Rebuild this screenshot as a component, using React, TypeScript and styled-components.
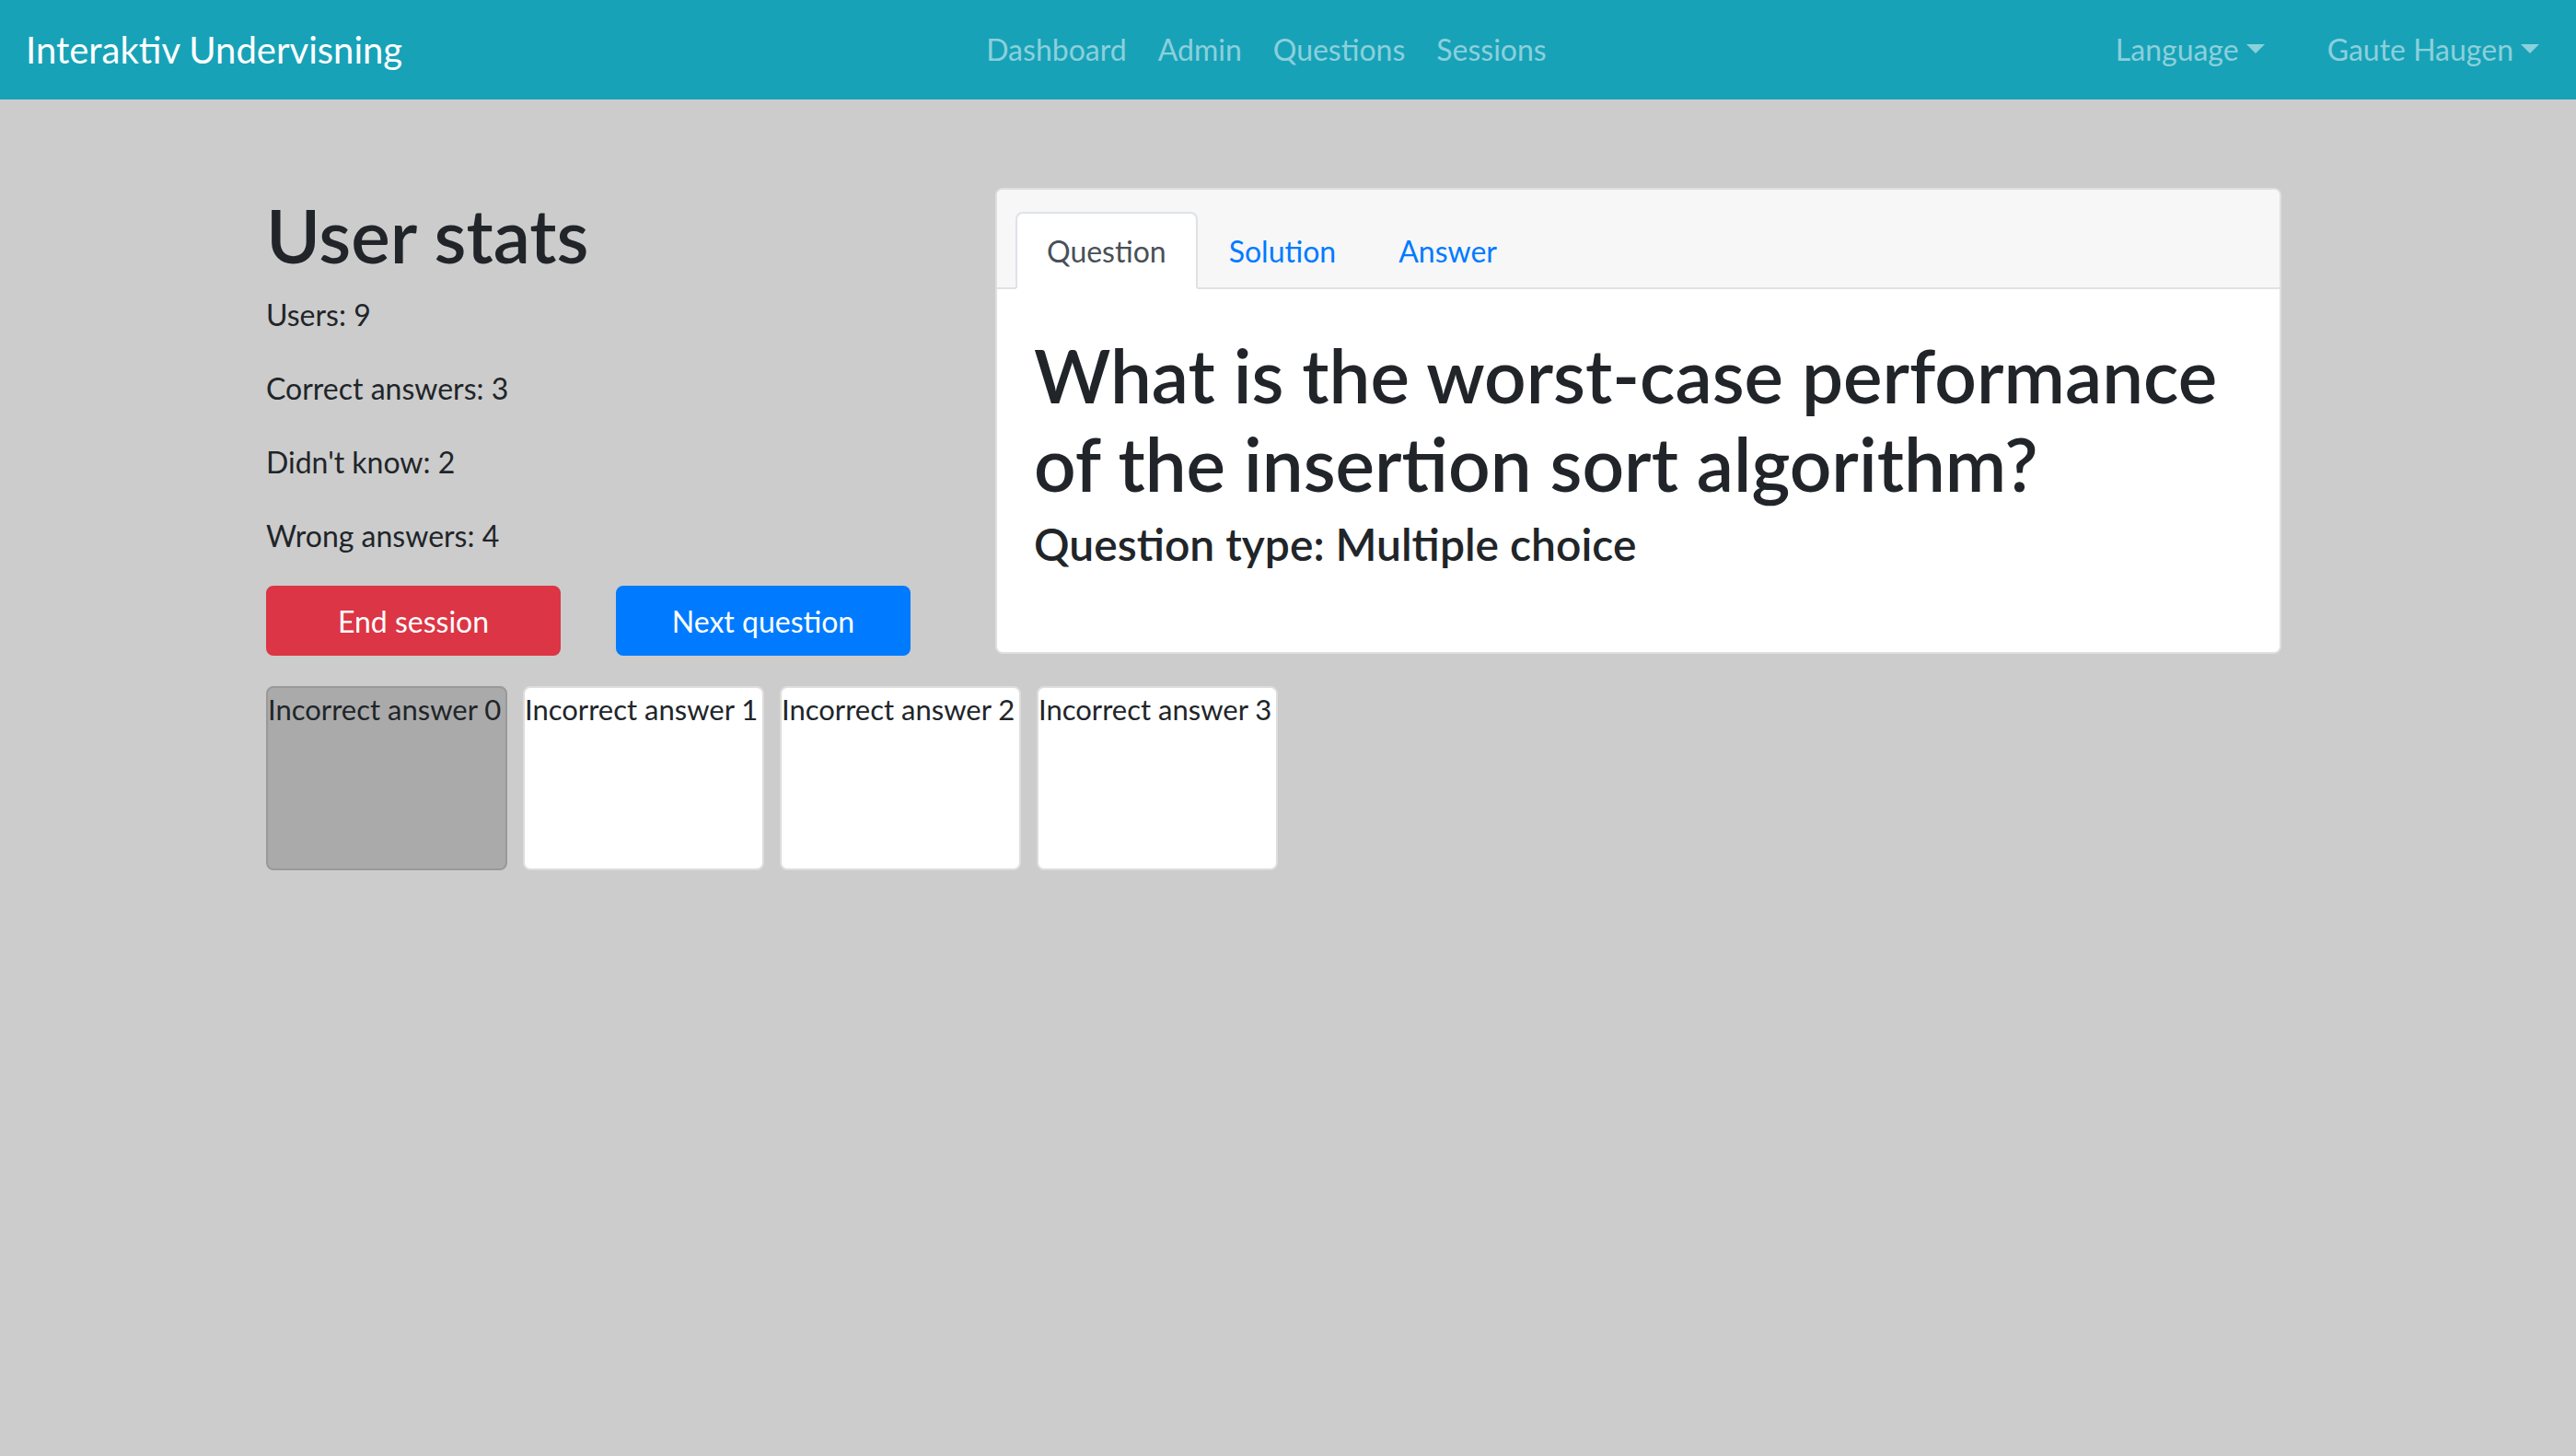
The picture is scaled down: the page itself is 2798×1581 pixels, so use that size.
import styled, { createGlobalStyle } from "styled-components";

const GlobalStyle = createGlobalStyle`
  * {
    box-sizing: border-box;
  }
  html, body {
    margin: 0;
    padding: 0;
  }
  body {
    background: #cccccc;
    color: #212529;
    font-family: Lato, "Noto Sans", "Liberation Sans", sans-serif;
    font-size: 32px;
    line-height: 1.5;
    min-height: 1581px;
  }
`;

const Navbar = styled.nav`
  display: flex;
  align-items: center;
  height: 108px;
  padding: 16px 24px 16px 28px;
  background: #17a2b8;
`;

const Brand = styled.a`
  color: #ffffff;
  font-size: 40px;
  line-height: 60px;
  padding: 10px 0;
  margin-right: 32px;
  white-space: nowrap;
`;

const NavList = styled.ul`
  display: flex;
  list-style: none;
  margin: 0 auto;
  padding: 0;
`;

const NavLink = styled.a`
  display: block;
  padding: 16px 17px;
  color: rgba(255, 255, 255, 0.5);
  white-space: nowrap;
`;

const RightNav = styled.div`
  display: flex;
  gap: 36px;
`;

const DropToggle = styled(NavLink)`
  padding: 16px;
  &::after {
    content: "";
    display: inline-block;
    margin-left: 8px;
    vertical-align: 8px;
    border-top: 10px solid;
    border-right: 10px solid transparent;
    border-left: 10px solid transparent;
    border-bottom: 0;
  }
`;

const Container = styled.main`
  width: 2280px;
  margin: 0 auto;
  padding: 96px 30px 0;
`;

const Row = styled.div`
  display: grid;
  grid-template-columns: 700px 1fr;
  column-gap: 60px;
`;

const StatsCol = styled.section`
  display: flex;
  flex-direction: column;
  padding-top: 3px;
`;

const Title = styled.h1`
  margin: 0 0 15px;
  font-size: 80px;
  font-weight: 600;
  line-height: 96px;
`;

const Stat = styled.p`
  margin: 0 0 32px;
`;

const ButtonRow = styled.div`
  display: grid;
  grid-template-columns: 320px 320px;
  column-gap: 60px;
  margin-top: -2px;
`;

const Button = styled.button<{ $variant: "danger" | "primary" }>`
  height: 76px;
  padding: 13px 24px 11px;
  border: 2px solid ${({ $variant }) => ($variant === "danger" ? "#dc3545" : "#007bff")};
  border-radius: 8px;
  background: ${({ $variant }) => ($variant === "danger" ? "#dc3545" : "#007bff")};
  color: #ffffff;
  font-family: inherit;
  font-size: 32px;
  line-height: 48px;
  cursor: pointer;
`;

const Card = styled.section`
  margin: 0 31px 0 32px;
  border: 2px solid rgba(0, 0, 0, 0.125);
  border-radius: 8px;
  background: #ffffff;
  align-self: start;
  overflow: hidden;
`;

const CardHeader = styled.header`
  padding: 24px 20px 0;
  background: #f7f7f7;
  border-bottom: 2px solid #dee2e6;
`;

const Tabs = styled.ul`
  display: flex;
  list-style: none;
  margin: 0 0 -2px;
  padding: 0;
`;

const Tab = styled.a<{ $active?: boolean }>`
  display: block;
  padding: 17px 32px 15px;
  line-height: 48px;
  border: 2px solid ${({ $active }) => ($active ? "#dee2e6" : "transparent")};
  border-bottom-color: ${({ $active }) => ($active ? "#ffffff" : "transparent")};
  border-radius: 8px 8px 0 0;
  background: ${({ $active }) => ($active ? "#ffffff" : "transparent")};
  color: ${({ $active }) => ($active ? "#495057" : "#007bff")};
`;

const CardBody = styled.div`
  padding: 45px 40px 88px;
`;

const Question = styled.h1`
  margin: 0 0 11px;
  font-size: 80px;
  font-weight: 600;
  line-height: 96px;
`;

const QuestionType = styled.h4`
  margin: 0;
  font-size: 48px;
  font-weight: 600;
  line-height: 58px;
`;

const Answers = styled.div`
  display: flex;
  gap: 17px;
  margin-top: 33px;
`;

const AnswerBox = styled.div<{ $selected?: boolean }>`
  width: 262px;
  height: 200px;
  padding-top: 3px;
  border: 2px solid ${({ $selected }) => ($selected ? "#999999" : "#dddddd")};
  border-radius: 8px;
  background: ${({ $selected }) => ($selected ? "#aaaaaa" : "#ffffff")};
  font-size: 31px;
  line-height: 40px;
  white-space: nowrap;
  overflow: hidden;
`;

const stats = [
  ["Users", 9],
  ["Correct answers", 3],
  ["Didn't know", 2],
  ["Wrong answers", 4],
];

export default function App() {
  return (
    <>
      <GlobalStyle />
      <Navbar>
        <Brand>Interaktiv Undervisning</Brand>
        <NavList>
          <li><NavLink>Dashboard</NavLink></li>
          <li><NavLink>Admin</NavLink></li>
          <li><NavLink>Questions</NavLink></li>
          <li><NavLink>Sessions</NavLink></li>
        </NavList>
        <RightNav>
          <DropToggle>Language</DropToggle>
          <DropToggle>Gaute Haugen</DropToggle>
        </RightNav>
      </Navbar>
      <Container>
        <Row>
          <StatsCol>
            <Title>User stats</Title>
            {stats.map(([label, value]) => (
              <Stat key={label}>
                {label}: {value}
              </Stat>
            ))}
            <ButtonRow>
              <Button $variant="danger">End session</Button>
              <Button $variant="primary">Next question</Button>
            </ButtonRow>
          </StatsCol>
          <Card>
            <CardHeader>
              <Tabs>
                <li><Tab $active>Question</Tab></li>
                <li><Tab>Solution</Tab></li>
                <li><Tab>Answer</Tab></li>
              </Tabs>
            </CardHeader>
            <CardBody>
              <Question>What is the worst-case performance of the insertion sort algorithm?</Question>
              <QuestionType>Question type: Multiple choice</QuestionType>
            </CardBody>
          </Card>
        </Row>
        <Answers>
          {[0, 1, 2, 3].map((i) => (
            <AnswerBox key={i} $selected={i === 0}>
              Incorrect answer {i}
            </AnswerBox>
          ))}
        </Answers>
      </Container>
    </>
  );
}
